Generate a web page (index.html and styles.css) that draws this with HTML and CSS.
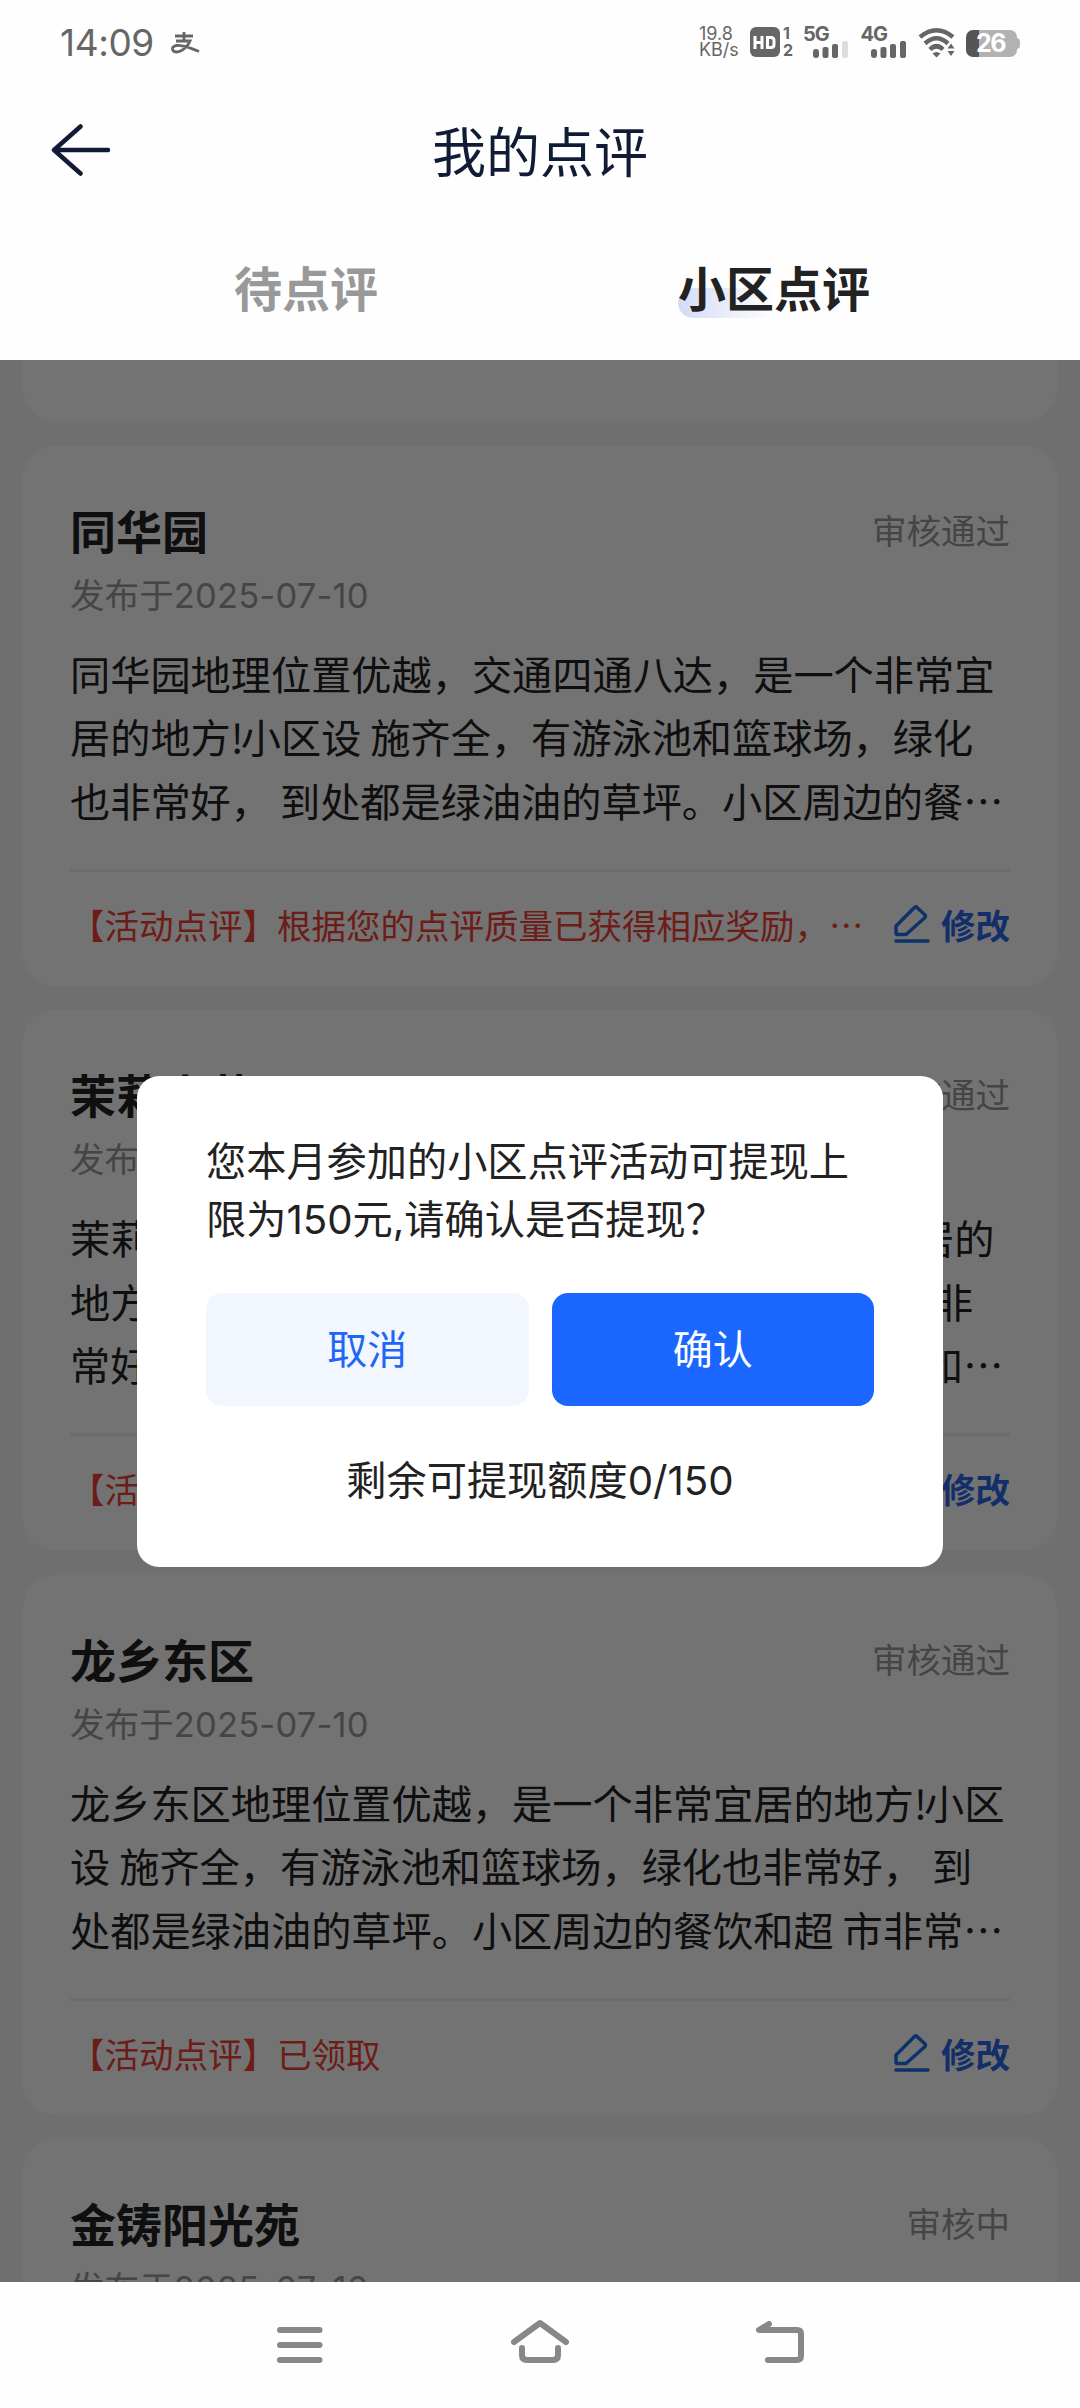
FILE: index.html
```html
<!DOCTYPE html>
<html lang="zh-CN">
<head>
<meta charset="utf-8">
<title>我的点评</title>
<link rel="stylesheet" href="styles.css">
</head>
<body>
<svg class="defs" width="0" height="0">
  <symbol id="pen" viewBox="0 0 36 38"><path d="M22.500 2 31 10 Q32 11.500 30.500 13 L12 29.500 H3.500 Q2 29.500 2 28 V21 L20.500 2.500 Q22 1.200 23 2.500Z" fill="none" stroke="#1c6fe8" stroke-width="3.500" stroke-linejoin="round"/><path d="M2 36H34" stroke="#1c6fe8" stroke-width="3.500" stroke-linecap="round"/></symbol>
</svg>
<div class="screen">
  <header class="status">
    <span class="clock">14:09</span>
    <svg class="pay" width="30" height="24" viewBox="170 31 30 24"><path d="M175 36H193M184 32V41M176 41H190Q187.500 47 181.500 50.500Q175.500 53.500 173 50.500Q171 46.500 176.500 45.500Q183 44.500 199 51.500" fill="none" stroke="#666" stroke-width="2.800"/></svg>
    <span class="speed"><span>19.8</span><span>KB/s</span></span>
    <svg class="hd" width="32" height="32" viewBox="749 26 32 32"><rect x="750" y="27" width="30" height="30" rx="6" fill="#666"/><path d="M755 36V49M755 42.500H762M762 36V49M767.500 37.500V47.500H771Q774 47.500 774 44.500V40.500Q774 37.500 771 37.500H766" fill="none" stroke="#fff" stroke-width="3"/></svg>
    <span class="sims"><span>1</span><span>2</span></span>
    <span class="net"><b>5G</b><svg width="36" height="17" viewBox="0 0 36 17"><g fill="#666"><rect x="0" y="8" width="6" height="9" rx="3"/><rect x="9.500" y="6" width="6" height="11" rx="2"/><rect x="19" y="3" width="6" height="14" rx="2"/></g><rect x="29" y="0" width="6" height="17" rx="2" fill="#ddd"/></svg></span>
    <span class="net"><b>4G</b><svg width="36" height="17" viewBox="0 0 36 17"><g fill="#666"><rect x="0" y="8" width="6" height="9" rx="3"/><rect x="9.500" y="6" width="6" height="11" rx="2"/><rect x="19" y="3" width="6" height="14" rx="2"/><rect x="29" y="0" width="6" height="17" rx="2"/></g></svg></span>
    <svg class="wifi" width="38" height="32" viewBox="0 0 38 32"><g fill="none" stroke="#666" stroke-width="4.500"><path d="M2 11Q18.500-2.500 35 11"/><path d="M7 17.500Q18.500 7 30 17.500"/><path d="M12 23.500Q18.500 17 25 23.500"/></g><path d="M14.500 27.500Q18.500 24.500 22.500 27.500L18.500 31.500Z" fill="#666"/><path d="M33 17.500l3.500 5h-7zM33 30l3.500-5h-7z" fill="#666"/></svg>
    <span class="battery">26</span>
  </header>
  <div class="titlebar">
    <svg class="back" width="60" height="54" viewBox="0 0 60 54"><path d="M30.500 3.500 4 27 30.500 50.500M4 27H58" fill="none" stroke="#101b36" stroke-width="4.500" stroke-linecap="round" stroke-linejoin="round"/></svg>
    <h1>我的点评</h1>
  </div>
  <nav class="tabs"><span class="tab">待点评</span><span class="tab on"><i>小区点评</i></span></nav>

  <main class="list">
    <section class="card stub"></section>
    <section class="card">
      <div class="head"><h2>同华园</h2><span class="state">审核通过</span></div>
      <p class="date">发布于<span class="num">2025-07-10</span></p>
      <p class="body"><span>同华园地理位置优越，交通四通八达，是一个非常宜</span><span>居的地方<em>!</em>小区设 施齐全，有游泳池和篮球场，绿化</span><span>也非常好， 到处都是绿油油的草坪。小区周边的餐<u>⋯</u></span></p>
      <div class="foot"><span class="note">【活动点评】根据您的点评质量已获得相应奖励，<u>⋯</u></span><span class="edit"><svg width="36" height="38"><use href="#pen"/></svg>修改</span></div>
    </section>
    <section class="card">
      <div class="head"><h2>茉莉小苑</h2><span class="state">审核通过</span></div>
      <p class="date">发布于<span class="num">2025-07-10</span></p>
      <p class="body"><span>茉莉小苑地理位置优越，交通便利，是个非常宜居的</span><span>地方<em>!</em>小区设 施齐全，有游泳池和篮球场，绿化也非</span><span>常好， 到处都是绿油油的草坪。小区周边的餐饮和<u>⋯</u></span></p>
      <div class="foot"><span class="note">【活动点评】已领取</span><span class="edit"><svg width="36" height="38"><use href="#pen"/></svg>修改</span></div>
    </section>
    <section class="card">
      <div class="head"><h2>龙乡东区</h2><span class="state">审核通过</span></div>
      <p class="date">发布于<span class="num">2025-07-10</span></p>
      <p class="body"><span>龙乡东区地理位置优越，是一个非常宜居的地方<em>!</em>小区</span><span>设 施齐全，有游泳池和篮球场，绿化也非常好， 到</span><span>处都是绿油油的草坪。小区周边的餐饮和超 市非常<u>⋯</u></span></p>
      <div class="foot"><span class="note">【活动点评】已领取</span><span class="edit"><svg width="36" height="38"><use href="#pen"/></svg>修改</span></div>
    </section>
    <section class="card">
      <div class="head"><h2>金铸阳光苑</h2><span class="state">审核中</span></div>
      <p class="date">发布于<span class="num">2025-07-10</span></p>
    </section>
    <div class="mask">
      <div class="dialog">
        <p class="msg"><span>您本月参加的小区点评活动可提现上</span><span>限为<span class="num">150</span>元<span class="num">,</span>请确认是否提现？</span></p>
        <div class="actions"><button class="cancel">取消</button><button class="ok">确认</button></div>
        <p class="left">剩余可提现额度<span class="num">0/150</span></p>
      </div>
    </div>
  </main>

  <footer class="sysnav">
    <svg width="560" height="90" viewBox="260 2300 560 90"><g fill="none" stroke="#888" stroke-width="6" stroke-linecap="round" stroke-linejoin="round"><path d="M280 2330H319.500M280 2345H319.500M280 2360H319.500"/><path d="M514 2342 540 2323 566 2342M522 2348V2355Q522 2360 527 2360H553Q558 2360 558 2355V2348"/><path d="M769 2324 759 2330H797Q801 2330 801 2334V2356Q801 2360 797 2360H768"/></g></svg>
  </footer>
</div>
</body>
</html>
```
FILE: styles.css
```css
* { box-sizing: border-box; margin: 0; padding: 0; }
body { background: #fff; font-family: "Noto Sans CJK SC", sans-serif; color: #222; }
.defs { position: absolute; }
.screen { width: 1080px; height: 2408px; display: flex; flex-direction: column; overflow: hidden; background: #fefefe; }
.num { font-family: Inter, "Noto Sans CJK SC", sans-serif; }

.status { height: 84px; display: flex; align-items: center; padding: 0 60px; color: #666; font-family: Inter, "Noto Sans CJK SC", sans-serif; }
.clock { flex: none; font-size: 37px; letter-spacing: -0.4px; width: 110px; white-space: nowrap; }
.pay { flex: none; margin: 2px 499px 0 0; }
.speed { flex: none; width: 50px; display: flex; flex-direction: column; font-size: 18px; line-height: 16px; height: 32px; white-space: nowrap; }
.hd { flex: none; margin-right: 2px; }
.sims { flex: none; width: 20px; display: flex; flex-direction: column; font-weight: 700; font-size: 16px; line-height: 17px; }
.net { flex: none; width: 57.500px; height: 32px; display: flex; flex-direction: column; }
.net b { font-size: 20px; line-height: 16px; height: 15px; letter-spacing: -1px; }
.net svg { margin-left: 10px; flex: none; }
.wifi { flex: none; margin-right: 10px; }
.battery { flex: none; position: relative; width: 51px; height: 27px; margin-top: 3px; border-radius: 7px; background: linear-gradient(90deg, #555 13px, #b2b2b2 13px); color: #fff; font-weight: 700; font-size: 25px; line-height: 27px; padding-left: 10px; letter-spacing: -1.500px; }
.battery::after { content: ""; position: absolute; right: -3px; top: 8px; width: 4px; height: 11px; border-radius: 0 4px 4px 0; background: #b2b2b2; }

.titlebar { height: 132px; display: grid; grid-template-columns: 1fr auto 1fr; align-items: center; padding: 0 50px; }
.titlebar h1 { font-size: 54px; font-weight: 400; line-height: 80px; color: #101b36; }
.tabs { height: 144px; display: grid; grid-template-columns: 468px 468px; padding: 30px 72px 0; }
.tab { text-align: center; font-size: 48px; line-height: 80px; font-weight: 700; color: #999; }
.on { color: #222; }
.on i { position: relative; z-index: 0; display: inline-block; font-style: normal; }
.on i::before { content: ""; position: absolute; z-index: -1; left: 0; top: 42px; width: 96px; height: 30px; border-radius: 0 0 0 15px; border-top-left-radius: 15px; background: linear-gradient(90deg, #d3dcf7, #fefefe); }

.list { position: relative; height: 1922px; overflow: hidden; background: #f4f4f4; display: flex; flex-direction: column; gap: 24.500px; padding: 0 23px; }
.card { flex: none; height: 540px; border-radius: 32px; background: #fdfdfd; padding: 47px 47px 0; }
.stub { height: 61px; border-radius: 0 0 32px 32px; }
.head { height: 75px; display: flex; justify-content: space-between; align-items: flex-start; }
.head h2 { font-size: 46px; font-weight: 700; line-height: 72px; }
.state { font-size: 34.500px; line-height: 73px; color: #999; }
.date { font-size: 34.600px; line-height: 50px; height: 50px; color: #999; }
.date .num { font-size: 34.500px; letter-spacing: 0.2px; }
.body { height: 251px; padding-top: 23px; }
.body > span { display: block; font-size: 40.200px; line-height: 63.500px; white-space: pre; }
.body em { font-style: normal; display: inline-block; width: 10px; }
u { text-decoration: none; }
.foot { border-top: 3px solid #eee; height: 107px; display: flex; justify-content: space-between; align-items: center; font-size: 34.500px; line-height: 50px; white-space: nowrap; }
.note { color: #f04134; }
.edit { display: flex; align-items: center; color: #2a66e6; font-weight: 700; }
.edit svg { margin-right: 11px; }

.mask { position: absolute; inset: 0; background: rgba(0, 0, 0, 0.545); }
.dialog { width: 806px; height: 491px; margin: 716px auto 0; border-radius: 22px; background: #fff; padding: 54px 69px 0; }
.msg > span { display: block; font-size: 40.200px; line-height: 57.500px; white-space: nowrap; }
.actions { display: grid; grid-template-columns: 1fr 1fr; gap: 23px; margin-top: 45px; }
.actions button { height: 113px; border: 0; border-radius: 16px; font: 40px "Noto Sans CJK SC", sans-serif; padding-bottom: 5px; }
.cancel { background: #f2f6ff; color: #1e66f5; }
.ok { background: #1a66ff; color: #fff; }
.left { text-align: center; font-size: 40.200px; line-height: 60px; margin-top: 42px; }

.sysnav { flex: 1; display: flex; justify-content: center; align-items: flex-start; padding-top: 18px; }
```
